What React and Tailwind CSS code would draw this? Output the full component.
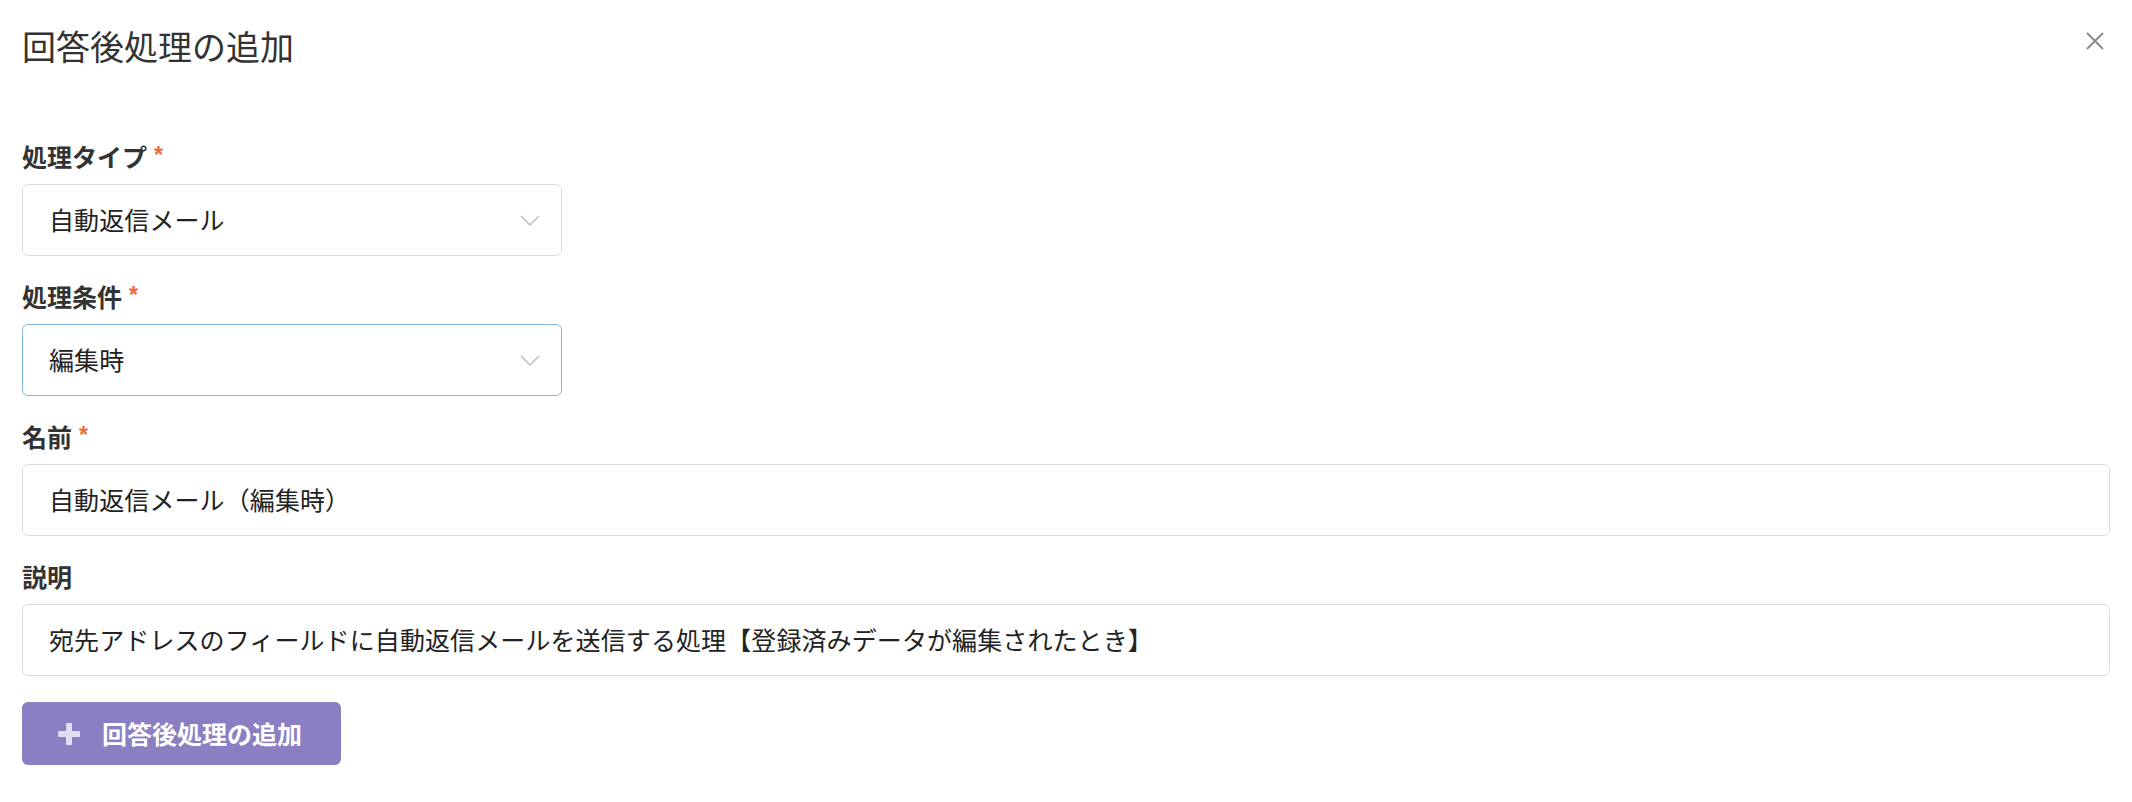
import React from "react";

const font = { fontFamily: '"Noto Sans CJK JP", "Noto Sans", sans-serif' };

function Chevron() {
  return (
    <svg width="20" height="11" viewBox="0 0 20 11" fill="none">
      <path d="M1 1 L10 10 L19 1" stroke="#b9b9c2" strokeWidth="1.4" />
    </svg>
  );
}

function Label({ text, required }) {
  return (
    <div className="flex items-start h-[28px]">
      <span className="text-[25px] leading-[28px] font-bold text-[#333333]">{text}</span>
      {required && (
        <span
          className="ml-[7px] mt-[2px] text-[23px] leading-none font-bold text-[#ea6a3c]"
          style={{ fontFamily: '"Liberation Sans", sans-serif' }}
        >
          *
        </span>
      )}
    </div>
  );
}

function Select({ value, focused }) {
  return (
    <div
      className={
        "mt-[14px] w-[540px] h-[72px] rounded-[6px] border bg-white flex items-center justify-between pl-[26px] pr-[21px] " +
        (focused ? "border-[#85b8e2]" : "border-[#dcdcdc]")
      }
    >
      <span className="text-[25px] tracking-[0.1px] text-[#222222]">{value}</span>
      <Chevron />
    </div>
  );
}

function Input({ value }) {
  return (
    <div className="mt-[14px] w-full h-[72px] rounded-[6px] border border-[#dcdcdc] bg-white flex items-center pl-[26px]">
      <span className="text-[25px] tracking-[0.1px] text-[#222222]">{value}</span>
    </div>
  );
}

export default function App() {
  return (
    <div className="w-[2132px] h-[802px] bg-white px-[22px]" style={font}>
      <div className="flex justify-between items-start">
        <h1 className="mt-[20px] text-[34px] leading-[52px] font-normal text-[#333333]">
          回答後処理の追加
        </h1>
        <button className="mt-[32px] mr-[6px] w-[18px] h-[18px] flex items-center justify-center">
          <svg width="18" height="18" viewBox="0 0 18 18" fill="none">
            <path d="M1 1 L17 17 M17 1 L1 17" stroke="#85858d" strokeWidth="1.8" />
          </svg>
        </button>
      </div>

      <div className="mt-[70px] flex flex-col gap-[26px]">
        <div>
          <Label text="処理タイプ" required />
          <Select value="自動返信メール" />
        </div>
        <div>
          <Label text="処理条件" required />
          <Select value="編集時" focused />
        </div>
        <div>
          <Label text="名前" required />
          <Input value="自動返信メール（編集時）" />
        </div>
        <div>
          <Label text="説明" />
          <Input value="宛先アドレスのフィールドに自動返信メールを送信する処理【登録済みデータが編集されたとき】" />
        </div>
        <div>
          <button className="h-[63px] rounded-[6px] bg-[#8b7fc3] flex items-center pl-[36px] pr-[39px] gap-[22px]">
            <svg width="22" height="22" viewBox="0 0 22 22">
              <rect x="8" y="0" width="6" height="22" rx="1" fill="#e2def2" />
              <rect x="0" y="8" width="22" height="6" rx="1" fill="#e2def2" />
            </svg>
            <span className="text-[25px] font-bold text-white">回答後処理の追加</span>
          </button>
        </div>
      </div>
    </div>
  );
}
